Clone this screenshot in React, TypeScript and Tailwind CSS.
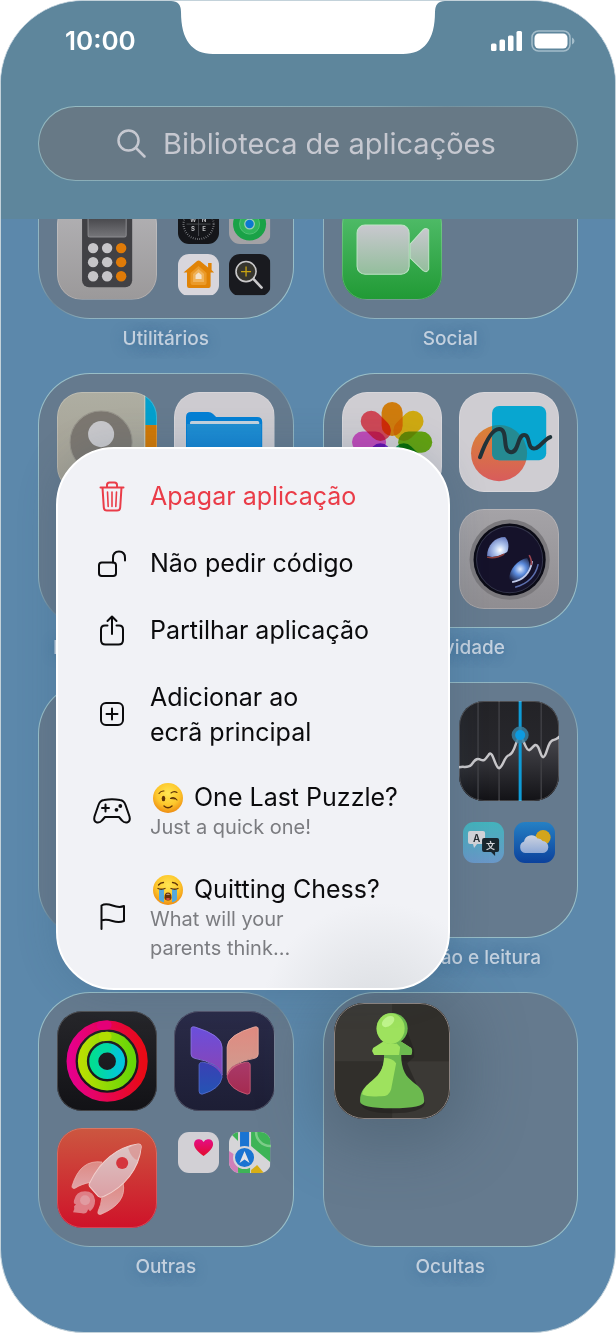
import type { ReactNode } from "react";

const Glyph = ({ size = 100, children }: { size?: number; children: ReactNode }) => (
  <svg viewBox={`0 0 ${size} ${size}`} className="block h-full w-full" aria-hidden="true">
    {children}
  </svg>
);

const Fade = ({ id, from, to, across = false }: { id: string; from: string; to: string; across?: boolean }) => (
  <linearGradient id={id} x1="0" y1="0" x2={across ? "1" : "0"} y2={across ? "0" : "1"}>
    <stop offset="0" stopColor={from} />
    <stop offset="1" stopColor={to} />
  </linearGradient>
);

/* ---------- app icons ---------- */

const Calculator = () => (
  <Glyph>
    <defs>
      <Fade id="calcBg" from="#b4b3b6" to="#9b999a" />
      <Fade id="calcScreen" from="#3c3c40" to="#76767a" />
    </defs>
    <rect width="100" height="100" fill="url(#calcBg)" />
    <rect x="25" y="10" width="50" height="78" rx="7" fill="#414145" />
    <rect x="31" y="14" width="38" height="24" rx="2" fill="url(#calcScreen)" stroke="#8b8b8f" strokeWidth="1" />
    {[49, 63, 77].map((y) =>
      [36, 50, 64].map((x) => (
        <circle key={`${x}-${y}`} cx={x} cy={y} r="5.2" fill={x === 64 ? "#e07b08" : "#c6c5c8"} />
      ))
    )}
  </Glyph>
);

const Compass = () => (
  <Glyph size={41}>
    <rect width="41" height="41" fill="#15161a" />
    <circle cx="20.5" cy="21" r="15" fill="none" stroke="#8d8f94" strokeWidth="2" strokeDasharray="0.6 1.6" />
    <path d="M20.5 9V33M8.5 21H32.5" stroke="#54565b" strokeWidth="0.8" />
    <g fill="#b9babd" fontSize="6" fontWeight="700" textAnchor="middle">
      <text x="15" y="19">W</text>
      <text x="26" y="19">N</text>
      <text x="15" y="28">S</text>
      <text x="26" y="28">E</text>
    </g>
  </Glyph>
);

const FindMy = () => (
  <Glyph size={41}>
    <rect width="41" height="41" fill="#a3a2a6" />
    <circle cx="20.5" cy="21" r="16.5" fill="#1aa247" />
    <circle cx="20.5" cy="21" r="10" fill="#2fb45a" stroke="#5cc67d" strokeWidth="0.8" />
    <circle cx="20.5" cy="21" r="5.4" fill="#9fcdb8" />
    <circle cx="20.5" cy="21" r="4.2" fill="#0b78d0" />
  </Glyph>
);

const HomeApp = () => (
  <Glyph size={41}>
    <rect width="41" height="41" fill="#d8d6dc" />
    <path d="M30 9h3.5v7l2.5 2.5h-3.5V32q0 2-2 2H11q-2 0-2-2V18.5H5.5L19 7q1.5-1.2 3 0l8 6.5z" fill="#e08306" />
    <path d="M20.5 12l8 7v10q0 2-2 2h-12q-2 0-2-2V19z" fill="#eb9a28" />
    <path d="M20.5 15l5.5 5v8h-11v-8z" fill="#f0b35a" />
    <path d="M20.5 18.5l3 2.5v4h-6v-4z" fill="#f3e3cc" />
  </Glyph>
);

const Magnifier = () => (
  <Glyph size={41}>
    <rect width="41" height="41" fill="#191a1f" />
    <path d="M24.5 25l8 8.5" stroke="#c9c8ca" strokeWidth="2.6" strokeLinecap="round" />
    <circle cx="17" cy="17.5" r="10" fill="#37362f" stroke="#c9c8ca" strokeWidth="1.6" />
    <path d="M17 12.5v10M12 17.5h10" stroke="#c9a410" strokeWidth="1.3" />
  </Glyph>
);

const FaceTime = () => (
  <Glyph>
    <defs>
      <Fade id="ftBg" from="#58c272" to="#219a35" />
      <Fade id="ftCam" from="#c9c8cf" to="#93be9c" />
    </defs>
    <rect width="100" height="100" fill="url(#ftBg)" />
    <rect x="15" y="26" width="52" height="49" rx="8" fill="url(#ftCam)" stroke="#bfe3c6" strokeWidth="1" />
    <path d="M68 45L81 30.5Q84 28 86.5 31V70Q85 74 81 71.5L68 59z" fill="url(#ftCam)" stroke="#bfe3c6" strokeWidth="1" />
  </Glyph>
);

const Contacts = () => (
  <Glyph>
    <defs>
      <Fade id="contBg" from="#aeaea2" to="#a29d90" />
    </defs>
    <rect width="100" height="100" fill="url(#contBg)" />
    <rect x="88" width="12" height="33" fill="#03a0cd" />
    <rect x="88" y="33" width="12" height="34" fill="#d27803" />
    <rect x="87" width="1" height="100" fill="#c9cbbf" />
    <circle cx="44" cy="50" r="31" fill="#7c7770" stroke="#96938a" strokeWidth="1" />
    <circle cx="44" cy="42" r="13" fill="#c9c8cb" />
    <path d="M22 71q8-13 22-13t22 13q-8 10-22 10t-22-10z" fill="#c9c8cb" />
  </Glyph>
);

const Files = () => (
  <Glyph>
    <defs>
      <Fade id="fileFront" from="#208fd2" to="#0878d2" />
    </defs>
    <rect width="100" height="100" fill="#cdcbd0" />
    <path d="M12 25q0-5 5-5h17q3 0 5 2l3 3h41q5 0 5 5v48H12z" fill="#047fd4" />
    <rect x="16" y="29" width="69" height="5" rx="1.5" fill="#c4d3de" />
    <path d="M13 32h74v44q0 5-5 5H18q-5 0-5-5z" fill="url(#fileFront)" />
  </Glyph>
);

const petals = ["#ff9a0f", "#ffd314", "#79c912", "#10aa5e", "#49b5f0", "#8335f0", "#ec5cde", "#ff5867"];

const Photos = () => (
  <Glyph>
    <rect width="100" height="100" fill="#cfcdd2" />
    {petals.map((color, i) => (
      <rect
        key={color}
        x="39.5"
        y="10"
        width="21"
        height="34"
        rx="10.5"
        fill={color}
        className="mix-blend-multiply"
        transform={`rotate(${i * 45} 50 50)`}
      />
    ))}
  </Glyph>
);

const Freeform = () => (
  <Glyph>
    <defs>
      <Fade id="freeSun" from="#d98434" to="#d85c5c" />
    </defs>
    <rect width="100" height="100" fill="#cfcdd2" />
    <circle cx="40" cy="61" r="28" fill="url(#freeSun)" />
    <rect x="33" y="14" width="54" height="54" rx="7" fill="#08a6d0" />
    <path d="M33 34q3-1 7-1a28 28 0 0 1 27 35H40q-7 0-7-7z" fill="#258a92" />
    <path
      d="M21 65C25 54 32 37 40 37C50 37 42 60 52 60C60 60 58 43 65 43C72 43 67 59 77 56C83 53 85 47 91 45"
      fill="none"
      stroke="#20333a"
      strokeWidth="4"
      strokeLinecap="round"
    />
  </Glyph>
);

const Camera = () => (
  <Glyph>
    <defs>
      <Fade id="camBg" from="#a5a3a7" to="#8f8d91" />
      <radialGradient id="camSpot" gradientUnits="userSpaceOnUse" cx="41" cy="41" r="14">
        <stop offset="0" stopColor="#ffffff" />
        <stop offset="0.4" stopColor="#b3c8ee" />
        <stop offset="1" stopColor="#6478bd" />
      </radialGradient>
      <radialGradient id="camGlow" gradientUnits="userSpaceOnUse" cx="61" cy="60" r="15">
        <stop offset="0" stopColor="#dfe9fb" />
        <stop offset="0.4" stopColor="#5b8bdc" />
        <stop offset="1" stopColor="#15122a" />
      </radialGradient>
    </defs>
    <rect width="100" height="100" fill="url(#camBg)" />
    <circle cx="50.5" cy="50.5" r="40" fill="#7b797d" />
    <circle cx="50.5" cy="50.5" r="36" fill="#0b0b16" />
    <circle cx="50.5" cy="50.5" r="33" fill="#15122a" stroke="#34354c" strokeWidth="1" />
    <path d="M28 47C28 36 36 28 46 28C50 32 50 39 48 43C42 47 34 49 28 47z" fill="url(#camSpot)" />
    <path d="M28 48q9 2 17-3" fill="none" stroke="#8c3f3c" strokeWidth="1.5" />
    <path d="M50 71C50 60 58 51 68 49C72 56 71 62 67 66C63 71 56 73 50 71z" fill="url(#camGlow)" />
    <path d="M53 73q17-3 20-21" fill="none" stroke="#c3cdec" strokeWidth="1.8" />
    <path d="M56 78q19-5 23-23" fill="none" stroke="#5c6fae" strokeWidth="1.5" />
    <path d="M70 46q3 5 2 10" fill="none" stroke="#9a4550" strokeWidth="1.6" />
  </Glyph>
);

const Stocks = () => (
  <Glyph>
    <defs>
      <Fade id="stkBg" from="#232327" to="#2b2b30" />
      <Fade id="stkArea" from="#47474d" to="#121216" />
    </defs>
    <rect width="100" height="100" fill="url(#stkBg)" />
    <path d="M0 66H12L19 58L25 60L32 52L40 67L49 54L55 51L61 37L69 49L77 44L84 56L92 40L100 36V100H0z" fill="url(#stkArea)" />
    <path d="M19 0V100M40 0V100M82 0V100" stroke="#3f3f44" strokeWidth="1.5" />
    <path
      d="M0 66C5 65 9 67 12 64C15 60 17 57 20 58C26 61 27 57 30 53C34 49 36 67 40 67C44 66 45 55 50 54C57 51 56 37 61 37C65 37 66 49 70 49C73 48 76 40 79 46C81 50 82 56 84 56C88 55 88 40 94 39C98 38 99 37 101 35"
      fill="none"
      stroke="#c7c6c9"
      strokeWidth="2.5"
    />
    <path d="M61 0V100" stroke="#0e9bd6" strokeWidth="3" />
    <circle cx="61" cy="34" r="8.5" fill="#3c7f9e" opacity="0.85" />
    <circle cx="61" cy="34" r="5" fill="#0d9be0" />
  </Glyph>
);

const Translate = () => (
  <Glyph size={41}>
    <defs>
      <Fade id="trBg" from="#43b3bc" to="#6a97c8" />
    </defs>
    <rect width="41" height="41" fill="url(#trBg)" />
    <path d="M7 9h13q2 0 2 2v9q0 2-2 2h-6l-3 4-1-4H7q-2 0-2-2v-9q0-2 2-2z" fill="#d3d4d9" />
    <path d="M21 16h13q2 0 2 2v10q0 2-2 2h-2v4l-4-4h-7q-2 0-2-2V18q0-2 2-2z" fill="#19262e" />
    <text x="13.5" y="19.5" fontSize="10" fontWeight="600" textAnchor="middle" fill="#22292e">A</text>
    <text x="27.5" y="26.5" fontSize="9" fontWeight="600" textAnchor="middle" fill="#d3d4d9">文</text>
  </Glyph>
);

const Weather = () => (
  <Glyph size={41}>
    <defs>
      <Fade id="weBg" from="#2580c4" to="#0b419c" />
      <Fade id="weCloud" from="#ccd2e0" to="#8ea9d6" />
    </defs>
    <rect width="41" height="41" fill="url(#weBg)" />
    <circle cx="29" cy="15.5" r="7.5" fill="#d3a51c" />
    <path d="M11 31a6 6 0 0 1-1-11.5a7.5 7.5 0 0 1 13.5-3a5 5 0 0 1 5 2.5a6 6 0 0 1-.5 12z" fill="url(#weCloud)" />
  </Glyph>
);

const Fitness = () => (
  <Glyph>
    <defs>
      <Fade id="fitBg" from="#26262a" to="#121216" />
      <Fade id="fitMove" from="#e5008c" to="#e80a16" across />
      <Fade id="fitEx" from="#b9de02" to="#66d608" across />
      <Fade id="fitStand" from="#02dd92" to="#02c6dc" across />
    </defs>
    <rect width="100" height="100" fill="url(#fitBg)" />
    <g fill="none" strokeWidth="9">
      <circle cx="50" cy="50" r="36" stroke="url(#fitMove)" />
      <circle cx="50" cy="50" r="24.7" stroke="url(#fitEx)" />
      <circle cx="50" cy="50" r="13.3" stroke="url(#fitStand)" />
    </g>
    <g fill="none" strokeWidth="9" strokeLinecap="round">
      <path d="M44 14.5L50 14" stroke="#e50078" />
      <path d="M46 25.6L50 25.3" stroke="#b2dd02" />
      <path d="M47 37L50 36.7" stroke="#02d9a0" />
    </g>
  </Glyph>
);

const Journal = () => (
  <Glyph>
    <defs>
      <Fade id="jrBg" from="#2a2b48" to="#1d1e35" />
      <Fade id="jrA" from="#6a4fdc" to="#8a44b4" />
      <Fade id="jrB" from="#e08a80" to="#cf9c90" />
      <Fade id="jrC" from="#3a40b4" to="#2454b4" />
      <Fade id="jrD" from="#a93a6a" to="#a52b50" />
    </defs>
    <rect width="100" height="100" fill="url(#jrBg)" />
    <path d="M17 18q0-3 4-2q27 8 27 20v28q-2-12-28-17q-3-1-3-4z" fill="url(#jrA)" stroke="#8d7be6" strokeWidth="0.8" />
    <path d="M84 18q0-3-4-2q-27 8-27 20v28q2-12 28-17q3-1 3-4z" fill="url(#jrB)" stroke="#efb0a2" strokeWidth="0.8" />
    <path d="M25 54q0-3 4-3q19 3 19 15q-2 12-20 17q-3 0-3-3z" fill="url(#jrC)" stroke="#5a6fd0" strokeWidth="0.8" />
    <path d="M76 54q0-3-4-3q-19 3-19 15q2 12 20 17q3 0 3-3z" fill="url(#jrD)" stroke="#d0607a" strokeWidth="0.8" />
    <path d="M29 51q18 3 19 15q-3-11-19-15z" fill="#8a44c4" />
    <path d="M72 51q-18 3-19 15q3-11 19-15z" fill="#d06a80" />
  </Glyph>
);

const Rocket = () => (
  <Glyph>
    <defs>
      <Fade id="rkBg" from="#cc5740" to="#cf1229" />
      <Fade id="rkBody" from="#dcc5c5" to="#dc9fa4" />
      <Fade id="rkFin" from="#dd8a84" to="#e0a4a8" />
    </defs>
    <rect width="100" height="100" fill="url(#rkBg)" />
    <path d="M45 34q-22-3-30 24q0 3 3 2q6-4 16-6z" fill="url(#rkFin)" stroke="#ecb3ae" strokeWidth="0.8" />
    <path d="M66 55q4 20-22 31q-4 1-3-3q3-6 4-15z" fill="url(#rkFin)" stroke="#ecb3ae" strokeWidth="0.8" />
    <path d="M81 16q3 0 3 3C82 41 67 59 47 68q-4 2-6 0l-8-9q-2-2 0-5C43 33 60 19 81 16z" fill="url(#rkBody)" stroke="#f1cfcc" strokeWidth="1" />
    <path d="M81 16q3 0 3 3q-1 7-4 13q-6-2-9-12q5-3 10-4z" fill="#d98f8c" opacity="0.7" />
    <circle cx="65" cy="35" r="6" fill="#d5353d" />
    <path d="M17 72q2-9 11-9t10 9q0 7-5 11l-2-2q-1 5-6 4l-9-1q2-3 1-6l2-2q-3 0-2-4z" fill="#df7f86" />
    <circle cx="28" cy="72" r="5" fill="#e19ba1" />
  </Glyph>
);

const Health = () => (
  <Glyph size={41}>
    <defs>
      <Fade id="hlHeart" from="#e50d86" to="#e20c2c" />
    </defs>
    <rect width="41" height="41" fill="#d2d0d5" />
    <path d="M25.5 24C20 20 16 16 16 12a5 5 0 0 1 9.5-2a5 5 0 0 1 9.5 2c0 4-4 8-9.5 12z" fill="url(#hlHeart)" />
  </Glyph>
);

const Maps = () => (
  <Glyph size={41}>
    <rect width="41" height="41" fill="#d6d5d8" />
    <path d="M22 0v14L41 30V0z" fill="#3eb457" />
    <circle cx="41" cy="0" r="14" fill="none" stroke="#7ccd88" strokeWidth="2.5" />
    <path d="M0 0h9v9z" fill="#3eb457" />
    <path d="M0 19l9 6v16H4l-4-5z" fill="#cf7fb8" />
    <path d="M22 38l6-5 7 8H22z" fill="#d8ae14" />
    <rect x="11" width="9" height="41" fill="#1a74d2" />
    <path d="M9 30h12v11H9z" fill="#3eb457" />
    <circle cx="15.5" cy="25.5" r="10.5" fill="#1a74d2" stroke="#d6d5d8" strokeWidth="2" />
    <path d="M15.5 19l5 12-5-3.5-5 3.5z" fill="#e3e4e8" />
  </Glyph>
);

const Pawn = () => (
  <Glyph size={116}>
    <rect width="116" height="116" fill="#312f2b" />
    <path d="M0 0h58v58H0zM58 58h58v58H58z" fill="#3b3935" />
    <path d="M27 100q1 10 31 10t33-10L73 60l7-6V47L73 28z" fill="#23221e" opacity="0.6" />
    <path d="M50 51h17c0 34 23 24 23 47q0 7-32 7t-32-7c0-23 24-13 24-47z" fill="#6cb94f" />
    <path d="M50 55q8 0 12 5l-5 26q-2 8-12 7-11 1-17-2c3-14 21-14 22-36z" fill="#9ee25e" />
    <path d="M50 38l-11 7-1 3 2 4h37l1-4-1-3-11-7z" fill="#9ee25e" />
    <path d="M66 38l11 7 1 3-1 4H65l1-8-6-6z" fill="#6cb94f" />
    <circle cx="58" cy="25.5" r="15.5" fill="#6cb94f" />
    <ellipse cx="56.5" cy="25.5" rx="14" ry="15.3" fill="#9ee25e" />
    <ellipse cx="54" cy="18.5" rx="7" ry="4.5" fill="#c0f58c" transform="rotate(-38 54 18.5)" />
  </Glyph>
);

/* ---------- menu icons ---------- */

const MenuGlyph = ({ children }: { children: ReactNode }) => (
  <svg
    viewBox="0 0 40 34"
    className="h-[34px] w-10 shrink-0"
    fill="none"
    stroke="currentColor"
    strokeWidth="2"
    strokeLinecap="round"
    strokeLinejoin="round"
    aria-hidden="true"
  >
    {children}
  </svg>
);

const TrashIcon = () => (
  <MenuGlyph>
    <path d="M8.5 7.5h23M15 7.5V5q0-2.5 2.5-2.5h5Q25 2.5 25 5v2.5M10.5 7.5l1.3 20q.2 3 3.2 3h10q3 0 3.2-3l1.3-20" />
    <path d="M15.5 12l.7 14.5M20 12v14.5M24.5 12l-.7 14.5" strokeWidth="1.6" />
  </MenuGlyph>
);

const UnlockIcon = () => (
  <MenuGlyph>
    <rect x="7" y="15.500" width="17" height="13.5" rx="2.8" />
    <path d="M21 15.5V11q0-6.500 6-6.500t6 6.500v2.500" />
  </MenuGlyph>
);

const ShareIcon = () => (
  <MenuGlyph>
    <path d="M15.5 11.5H13q-4 0-4 4V26q0 4.500 4.500 4.500h13q4.500 0 4.500-4.500V15.500q0-4-4-4h-2.500M20 20V2.500M15.500 7L20 2.500 24.500 7" />
  </MenuGlyph>
);

const AddIcon = () => (
  <MenuGlyph>
    <rect x="9" y="5" width="22" height="22" rx="5" />
    <path d="M20 10.5v11M14.5 16h11" />
  </MenuGlyph>
);

const GamepadIcon = () => (
  <MenuGlyph>
    <path d="M12 5q8-1.500 16 0q4 .5 5.500 5L37.500 21.500q1.200 5-2.500 6-3 .5-5-2l-3-3.500H13L10 25.500q-2 2.500-5 2-3.700-1-2.500-6L6.500 10Q8 5.500 12 5zM10 13h7M13.500 9.500v7" />
    <g fill="currentColor" stroke="none">
      <circle cx="24.5" cy="14.8" r="1.9" />
      <circle cx="28.3" cy="11" r="1.9" />
    </g>
  </MenuGlyph>
);

const FlagIcon = () => (
  <MenuGlyph>
    <path d="M9.5 27V3.500q4-2.500 11 0t11.500.5v15q-5 2-11.500 0t-11-.5" />
  </MenuGlyph>
);

const WinkEmoji = () => (
  <svg viewBox="0 0 30 30" className="h-[30px] w-[30px]" role="img" aria-label="😉">
    <defs>
      <radialGradient id="emojiFace" cx="0.5" cy="0.35" r="0.65">
        <stop offset="0" stopColor="#ffe652" />
        <stop offset="0.6" stopColor="#fdc72c" />
        <stop offset="1" stopColor="#ee8d13" />
      </radialGradient>
    </defs>
    <circle cx="15" cy="15" r="15" fill="url(#emojiFace)" />
    <ellipse cx="10.5" cy="15.5" rx="1.8" ry="2.7" fill="#5f3307" />
    <path d="M6 10.5q2-3 5-2.5M18 10q3-2.5 6-.5M17.5 15.5q3.5-2.5 6.5 1.5M18 15.5l5 .5" fill="none" stroke="#5f3307" strokeWidth="1.1" strokeLinecap="round" />
    <path d="M11 23q4 3.5 8 0" fill="none" stroke="#5f3307" strokeWidth="1.4" strokeLinecap="round" />
  </svg>
);

const CryEmoji = () => (
  <svg viewBox="0 0 30 30" className="h-[30px] w-[30px]" role="img" aria-label="😭">
    <circle cx="15" cy="15" r="15" fill="url(#emojiFace)" />
    <path d="M6 14h5v13.5q-3.5-1-5-3zM19 14h5v10.5q-1.5 2-5 3z" fill="#55a9dc" />
    <path d="M5.5 10q2-2.5 5-2.5M24.5 10q-2-2.5-5-2.5M5 13.5q3 1.5 7 0M25 13.5q-3 1.5-7 0" fill="none" stroke="#5f3307" strokeWidth="1.3" strokeLinecap="round" />
    <path d="M11.5 22.5q0-5 3.5-5t3.5 5q0 3-3.5 3t-3.5-3z" fill="#6a3208" />
    <path d="M12.7 19.5q2.3-1.5 4.6 0z" fill="#fff" />
    <path d="M12.5 24q2.5-2 5 0-2.5 1.8-5 0z" fill="#e0564a" />
  </svg>
);

/* ---------- building blocks ---------- */

type AppItem = { name: string; icon: ReactNode };

type Folder = {
  name: string;
  apps?: (AppItem | null)[];
  minis?: AppItem[];
  lifted?: boolean;
};

const folders: Folder[] = [
  {
    name: "Utilitários",
    apps: [null, null, { name: "Calculadora", icon: <Calculator /> }],
    minis: [
      { name: "Bússola", icon: <Compass /> },
      { name: "Encontrar", icon: <FindMy /> },
      { name: "Casa", icon: <HomeApp /> },
      { name: "Lupa", icon: <Magnifier /> },
    ],
  },
  { name: "Social", apps: [null, null, { name: "FaceTime", icon: <FaceTime /> }] },
  {
    name: "Produtividade e finanças",
    apps: [
      { name: "Contactos", icon: <Contacts /> },
      { name: "Ficheiros", icon: <Files /> },
    ],
  },
  {
    name: "Criatividade",
    apps: [
      { name: "Fotografias", icon: <Photos /> },
      { name: "Freeform", icon: <Freeform /> },
      null,
      { name: "Câmara", icon: <Camera /> },
    ],
  },
  { name: "Viagens" },
  {
    name: "Informação e leitura",
    apps: [null, { name: "Bolsa", icon: <Stocks /> }, null],
    minis: [
      { name: "Traduzir", icon: <Translate /> },
      { name: "Meteorologia", icon: <Weather /> },
    ],
  },
  {
    name: "Outras",
    apps: [
      { name: "Fitness", icon: <Fitness /> },
      { name: "Diário", icon: <Journal /> },
      { name: "Rocket", icon: <Rocket /> },
    ],
    minis: [
      { name: "Saúde", icon: <Health /> },
      { name: "Mapas", icon: <Maps /> },
    ],
  },
  { name: "Ocultas", lifted: true },
];

const menuItems = [
  { title: "Apagar aplicação", icon: <TrashIcon />, danger: true },
  { title: "Não pedir código", icon: <UnlockIcon /> },
  { title: "Partilhar aplicação", icon: <ShareIcon /> },
  { title: "Adicionar ao ecrã principal", icon: <AddIcon /> },
  { title: "One Last Puzzle?", icon: <GamepadIcon />, emoji: <WinkEmoji />, note: "Just a quick one!" },
  { title: "Quitting Chess?", icon: <FlagIcon />, emoji: <CryEmoji />, note: "What will your parents think..." },
];

function FolderTile({ folder }: { folder: Folder }) {
  return (
    <section className="min-w-0">
      <div className="grid aspect-square grid-cols-2 grid-rows-2 gap-[17px] rounded-[52px] border border-transparent p-[18px] [background:linear-gradient(#657a8e,#657a8e)_padding-box,linear-gradient(135deg,#9cc3cb,#8fb2bf_40%,#6d8798_50%,#8fb2bf_60%,#9cc3cb)_border-box]">
        {folder.apps?.map((app, i) =>
          app ? (
            <button
              key={app.name}
              aria-label={app.name}
              className="relative aspect-square overflow-hidden rounded-[25px] after:absolute after:inset-0 after:rounded-[25px] after:border after:border-white/20"
            >
              {app.icon}
            </button>
          ) : (
            <span key={i} />
          )
        )}
        {folder.minis && (
          <div className="grid grid-cols-2 content-start gap-[10px] p-1">
            {folder.minis.map((app) => (
              <button key={app.name} aria-label={app.name} className="aspect-square overflow-hidden rounded-[11px]">
                {app.icon}
              </button>
            ))}
          </div>
        )}
        {folder.lifted && (
          <div className="relative aspect-square">
            <button
              aria-label="Chess"
              className="absolute -inset-2 overflow-hidden rounded-[30px] shadow-[0_10px_60px_16px_rgba(60,80,95,0.4)] after:absolute after:inset-0 after:rounded-[30px] after:border after:border-[#8d8481]"
            >
              <Pawn />
            </button>
          </div>
        )}
      </div>
      <h2 className="truncate text-center text-[19px] leading-10 font-medium text-[#c3d0de] [text-shadow:0_2px_12px_rgba(40,90,140,0.6)]">
        {folder.name}
      </h2>
    </section>
  );
}

function StatusBar() {
  return (
    <div className="flex h-20 items-center justify-between pr-10 pl-16 text-white">
      <time className="text-[26px] leading-8 font-semibold">10:00</time>
      <div className="flex items-center gap-2">
        <svg viewBox="0 0 32 20" className="h-5 w-8" fill="currentColor" role="img" aria-label="Rede">
          <rect x="0" y="12.5" width="5.5" height="7.5" rx="1.5" />
          <rect x="8.5" y="8.5" width="5.5" height="11.5" rx="1.5" />
          <rect x="17" y="4.5" width="5.5" height="15.5" rx="1.5" />
          <rect x="25.5" y="0" width="5.5" height="20" rx="1.5" />
        </svg>
        <svg viewBox="0 0 44 22" className="h-[22px] w-11" fill="none" role="img" aria-label="Bateria">
          <rect x="1" y="1" width="38" height="20" rx="6.5" stroke="#a4bdca" strokeWidth="1.5" />
          <rect x="3.5" y="3.5" width="33" height="15" rx="4.5" fill="#fff" />
          <path d="M41 7.5q2.5 1 2.5 3.5T41 14.5z" fill="#a4bdca" />
        </svg>
      </div>
    </div>
  );
}

export default function App() {
  return (
    <div className="bg-white font-['Inter','Noto_Sans_CJK_SC',sans-serif]">
      <main className="relative overflow-hidden rounded-[84px] border border-[#c3d2da] bg-[#5c88ab]">
        <svg viewBox="0 0 274 55" className="absolute -top-px left-1/2 h-[55px] w-[274px] -translate-x-1/2" aria-hidden="true">
          <path d="M0 0H274V1Q264 1 264 12C264 40 253 54 232 54H42C21 54 10 40 10 12Q10 1 0 1z" fill="#fff" />
        </svg>

        {/* Header */}
        <header className="h-[218px] bg-[#5e869c]">
          <StatusBar />
          <label className="mx-[37px] mt-[25px] flex h-[75px] items-center gap-4 rounded-[38px] border border-transparent pl-[78px] [background:linear-gradient(#677986,#677986)_padding-box,linear-gradient(160deg,#96bcc3,#87a9b4_45%,#7593a0_55%,#96bcc3)_border-box]">
            <svg viewBox="0 0 30 30" className="h-[30px] w-[30px] shrink-0" fill="none" stroke="#c6c8d0" strokeWidth="2.5" strokeLinecap="round" aria-hidden="true">
              <circle cx="11.5" cy="11.5" r="10" />
              <path d="M19 19l8.5 8.5" />
            </svg>
            <input
              type="search"
              aria-label="Biblioteca de aplicações"
              placeholder="Biblioteca de aplicações"
              className="min-w-0 flex-1 bg-transparent text-[29px] leading-9 outline-none placeholder:text-[#c6c8d0]"
            />
          </label>
        </header>

        {/* Folders */}
        <div className="overflow-hidden">
          <div className="-mt-[156px] grid grid-cols-2 gap-x-[29px] gap-y-[14px] px-[37px] pb-[45px]">
            {folders.map((folder) => (
              <FolderTile key={folder.name} folder={folder} />
            ))}
          </div>
        </div>

        {/* Context menu */}
        <ul className="absolute top-[446px] left-[55px] w-[394px] rounded-[58px] border-2 border-white bg-[#f1f2f6] bg-[radial-gradient(circle_at_82%_106%,#d9dce0,#f1f2f6_18%)] pt-[14px] pb-[9px] shadow-[0_0_40px_rgba(40,80,110,0.2)]">
          {menuItems.map((item) => (
            <li key={item.title}>
              <button
                className={`flex w-full items-center gap-[18px] py-4 pr-10 pl-[34px] text-left ${item.danger ? "text-[#ea3c48]" : "text-[#0b0b0d]"}`}
              >
                {item.icon}
                <span className="min-w-0 flex-1">
                  <span className={`flex items-center gap-[11px] text-[25px] ${item.note ? "leading-[31px]" : "leading-[35px]"}`}>
                    {item.emoji && <span className="ml-[3px] shrink-0">{item.emoji}</span>}
                    <span className={item.emoji ? "whitespace-nowrap" : "text-balance"}>{item.title}</span>
                  </span>
                  {item.note && (
                    <span className="block max-w-[170px] text-[20px] leading-[29px] text-[#7b7c80]">{item.note}</span>
                  )}
                </span>
              </button>
            </li>
          ))}
        </ul>
      </main>
    </div>
  );
}
